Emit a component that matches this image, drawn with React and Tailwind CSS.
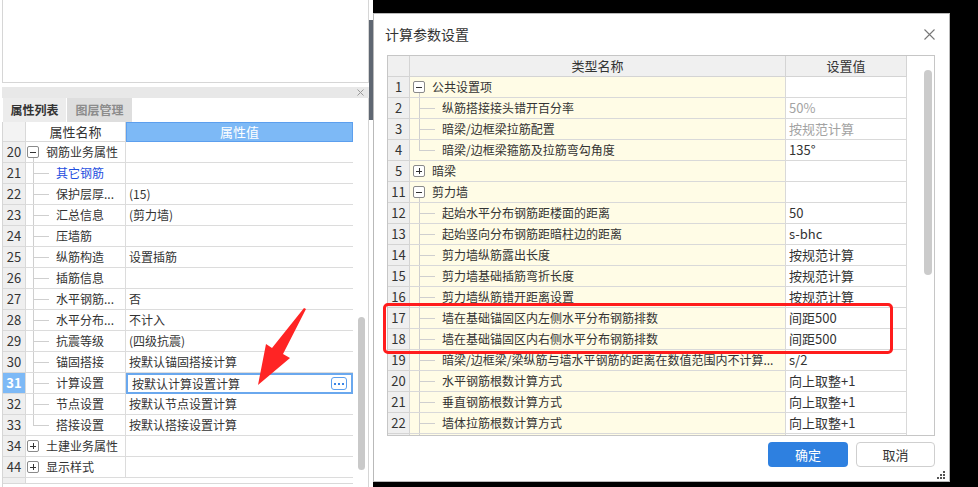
import React from 'react';

const FONT = "font-['Noto_Sans_CJK_SC',sans-serif]";

const leftRows = [
  { num: '20', name: '钢筋业务属性', kind: 'open' },
  { num: '21', name: '其它钢筋', kind: 'child', blue: true },
  { num: '22', name: '保护层厚...', value: '(15)', kind: 'child' },
  { num: '23', name: '汇总信息', value: '(剪力墙)', kind: 'child' },
  { num: '24', name: '压墙筋', kind: 'child' },
  { num: '25', name: '纵筋构造', value: '设置插筋', kind: 'child' },
  { num: '26', name: '插筋信息', kind: 'child' },
  { num: '27', name: '水平钢筋...', value: '否', kind: 'child' },
  { num: '28', name: '水平分布...', value: '不计入', kind: 'child' },
  { num: '29', name: '抗震等级', value: '(四级抗震)', kind: 'child' },
  { num: '30', name: '锚固搭接', value: '按默认锚固搭接计算', kind: 'child' },
  { num: '31', name: '计算设置', value: '按默认计算设置计算', kind: 'child', selected: true },
  { num: '32', name: '节点设置', value: '按默认节点设置计算', kind: 'child' },
  { num: '33', name: '搭接设置', value: '按默认搭接设置计算', kind: 'child', last: true },
  { num: '34', name: '土建业务属性', kind: 'closed' },
  { num: '44', name: '显示样式', kind: 'closed' },
];

const rightRows = [
  { num: '1', name: '公共设置项', kind: 'open' },
  { num: '2', name: '纵筋搭接接头错开百分率', value: '50%', kind: 'child', gray: true },
  { num: '3', name: '暗梁/边框梁拉筋配置', value: '按规范计算', kind: 'child', gray: true },
  { num: '4', name: '暗梁/边框梁箍筋及拉筋弯勾角度', value: '135°', kind: 'child', last: true },
  { num: '5', name: '暗梁', kind: 'closed' },
  { num: '11', name: '剪力墙', kind: 'open' },
  { num: '12', name: '起始水平分布钢筋距楼面的距离', value: '50', kind: 'child' },
  { num: '13', name: '起始竖向分布钢筋距暗柱边的距离', value: 's-bhc', kind: 'child' },
  { num: '14', name: '剪力墙纵筋露出长度', value: '按规范计算', kind: 'child' },
  { num: '15', name: '剪力墙基础插筋弯折长度', value: '按规范计算', kind: 'child' },
  { num: '16', name: '剪力墙纵筋错开距离设置', value: '按规范计算', kind: 'child' },
  { num: '17', name: '墙在基础锚固区内左侧水平分布钢筋排数', value: '间距500', kind: 'child' },
  { num: '18', name: '墙在基础锚固区内右侧水平分布钢筋排数', value: '间距500', kind: 'child' },
  { num: '19', name: '暗梁/边框梁/梁纵筋与墙水平钢筋的距离在数值范围内不计算...', value: 's/2', kind: 'child' },
  { num: '20', name: '水平钢筋根数计算方式', value: '向上取整+1', kind: 'child' },
  { num: '21', name: '垂直钢筋根数计算方式', value: '向上取整+1', kind: 'child' },
  { num: '22', name: '墙体拉筋根数计算方式', value: '向上取整+1', kind: 'child' },
  { num: '', name: '', kind: 'child' },
];

const TreeBox = ({ open }) => (
  <div className="relative w-[12px] h-[12px] shrink-0 border border-[#8a8a8a] rounded-[2px] bg-white">
    <div className="absolute left-[2px] top-[4.5px] w-[6px] h-px bg-[#333]" />
    {!open && <div className="absolute left-[4.5px] top-[2px] w-px h-[6px] bg-[#333]" />}
  </div>
);

// tree name cell used by both tables
const TreeCell = ({ row, lineX, boxPad, childPad, blue }) => {
  if (row.kind === 'child') {
    return (
      <>
        <div
          className={`absolute top-0 w-px bg-[#cfcfcf] ${row.last ? 'h-1/2' : 'bottom-0'}`}
          style={{ left: lineX }}
        />
        <div className="absolute top-1/2 w-[16px] h-px bg-[#cfcfcf]" style={{ left: lineX }} />
        <span
          className={`truncate pr-[8px] ${blue ? 'text-[#1f4fe0]' : 'text-[#333]'}`}
          style={{ paddingLeft: childPad }}
        >
          {row.name}
        </span>
      </>
    );
  }
  return (
    <>
      {row.kind === 'open' && (
        <div className="absolute top-[16px] bottom-0 w-px bg-[#cfcfcf]" style={{ left: lineX }} />
      )}
      <div className="flex items-center" style={{ paddingLeft: boxPad }}>
        <TreeBox open={row.kind === 'open'} />
        <span className="ml-[7px] text-[#333]">{row.name}</span>
      </div>
    </>
  );
};

const LeftPanel = () => (
  <div className="relative w-[369px] h-full bg-white shrink-0">
    <div className="ml-[2px] w-[367px] h-[83px] border-x border-b border-[#d6d6d6]" />
    <div className="mt-[4px] ml-[2px] w-[367px] h-[11px] bg-[#e8e8e8] flex items-center justify-end pr-[5px]">
      <svg width="7" height="7" viewBox="0 0 7 7">
        <path d="M0.5 0.5L6.5 6.5M6.5 0.5L0.5 6.5" stroke="#9a9a9a" strokeWidth="1" />
      </svg>
    </div>
    <div className="ml-[2px] w-[367px] h-[24px] flex border-r border-[#d6d6d6] text-[12px] font-bold">
      <div className="ml-[1px] w-[63px] bg-[#ececec] text-[#333] flex items-center justify-center">属性列表</div>
      <div className="ml-[1px] w-[65px] bg-[#dedede] text-[#8c8c8c] flex items-center justify-center">图层管理</div>
    </div>
    <div className="flex">
      <div className="ml-[2px] border-l border-[#d6d6d6] text-[12px]">
        <div className="flex h-[20px]">
          <div className="w-[23px] border-r border-b border-[#d9d9d9] bg-[#f3f3f3]" />
          <div className="w-[100px] border-r border-b border-[#d9d9d9] flex items-center justify-center text-[#333] text-[13px]">属性名称</div>
          <div className="w-[227px] bg-[#7db9f6] border border-[#5c9fee] flex items-center justify-center text-white text-[13px]">属性值</div>
        </div>
        {leftRows.map((r) => (
          <div key={r.num} className="flex h-[21px]">
            <div
              className={`w-[23px] border-r border-b border-[#d9d9d9] flex items-center justify-center text-[13px] ${
                r.selected ? 'bg-[#7db9f6] text-white font-bold' : 'bg-[#efefef] text-[#333]'
              }`}
            >
              {r.num}
            </div>
            <div className="relative w-[100px] border-r border-b border-[#dcdcdc] flex items-center whitespace-nowrap">
              <TreeCell row={r} lineX={7} boxPad={1} childPad={30} blue={r.blue} />
            </div>
            {r.selected ? (
              <div className="w-[227px] border-2 border-[#6aa8ee] flex items-center pl-[4px] pr-[4px] text-[#333]">
                <span className="flex-1">{r.value}</span>
                <div className="w-[16px] h-[13px] border border-[#5c9fee] rounded-[3px] flex items-center justify-center gap-[2px]">
                  <div className="w-[2px] h-[2px] bg-[#3c86e6]" />
                  <div className="w-[2px] h-[2px] bg-[#3c86e6]" />
                  <div className="w-[2px] h-[2px] bg-[#3c86e6]" />
                </div>
              </div>
            ) : (
              <div className="w-[227px] border-b border-[#dcdcdc] flex items-center pl-[3px] text-[#333] whitespace-nowrap">
                {r.value}
              </div>
            )}
          </div>
        ))}
        <div className="flex h-[6px]">
          <div className="w-[23px] bg-[#efefef] border-r border-b border-[#d9d9d9]" />
          <div className="flex-1 border-b border-[#d9d9d9]" />
        </div>
      </div>
      <div className="flex-1 border-r border-[#d6d6d6] h-[366px] pt-[195px] pl-[5px]">
        <div className="w-[7px] h-[153px] rounded-full bg-[#c9c9c9]" />
      </div>
    </div>
    <svg className="absolute left-0 top-0 pointer-events-none" width="369" height="487">
      <polygon points="306,309 304,308 272,348 266,344 258,385 290,358 283,354" fill="#ff2424" />
    </svg>
  </div>
);

const Dialog = () => (
  <div className="relative w-[577px] h-[469px] bg-white border border-[#b9b9b9]">
    <div className="h-[41px] flex items-center justify-between pl-[11px] pr-[14px]">
      <span className="text-[14px] text-[#333]">计算参数设置</span>
      <svg width="11" height="11" viewBox="0 0 11 11">
        <path d="M0.5 0.5L10.5 10.5M10.5 0.5L0.5 10.5" stroke="#777" strokeWidth="1.1" />
      </svg>
    </div>
    <div className="relative ml-[13px] w-[548px] h-[381px] border border-[#c6c6c6] flex text-[12px]">
      <div className="flex flex-col overflow-hidden">
        <div className="flex h-[21px] shrink-0 bg-[#f0f0f0] text-[13px] text-[#333]">
          <div className="w-[22px] border-r border-b border-[#d4d4d4]" />
          <div className="w-[376px] border-r border-b border-[#d4d4d4] flex items-center justify-center">类型名称</div>
          <div className="w-[121px] border-r border-b border-[#d4d4d4] flex items-center justify-center">设置值</div>
        </div>
        {rightRows.map((r, i) => (
          <div key={i} className="flex h-[21px] shrink-0">
            <div className="w-[22px] bg-[#efefef] border-r border-b border-[#d4d4d4] flex items-center justify-center text-[13px] text-[#333]">
              {r.num}
            </div>
            <div className="relative w-[376px] bg-[#fffce6] border-r border-b border-[#d9d9d9] flex items-center whitespace-nowrap overflow-hidden">
              <TreeCell row={r} lineX={9} boxPad={3} childPad={32} />
            </div>
            <div
              className={`w-[121px] border-r border-b border-[#d9d9d9] flex items-center pl-[3px] whitespace-nowrap text-[13px] ${
                r.gray ? 'text-[#a3a3a3]' : 'text-[#333]'
              }`}
            >
              {r.value}
            </div>
          </div>
        ))}
      </div>
      <div className="flex-1 pt-[14px] pl-[17px]">
        <div className="w-[8px] h-[205px] rounded-full bg-[#cbcbcb]" />
      </div>
      <div className="absolute left-[-5px] top-[247px] w-[510px] h-[51px] border-[3px] border-[#ff1c1c] rounded-[5px] pointer-events-none" />
    </div>
    <div className="mt-[6px] flex justify-end gap-[8px] pr-[14px]">
      <button className="w-[80px] h-[25px] rounded-[4px] bg-[#2e80e0] text-white text-[13px]">确定</button>
      <button className="w-[79px] h-[25px] rounded-[4px] border border-[#cfcfcf] bg-white text-[#333] text-[13px]">取消</button>
    </div>
    <svg className="absolute right-[3px] bottom-[1px]" width="9" height="9" viewBox="0 0 9 9">
      <rect x="6" y="0" width="2" height="2" fill="#555" />
      <rect x="3" y="3" width="2" height="2" fill="#555" />
      <rect x="6" y="3" width="2" height="2" fill="#555" />
      <rect x="0" y="6" width="2" height="2" fill="#555" />
      <rect x="3" y="6" width="2" height="2" fill="#555" />
      <rect x="6" y="6" width="2" height="2" fill="#555" />
    </svg>
  </div>
);

export default function App() {
  return (
    <div className={`flex w-[978px] h-[487px] overflow-hidden bg-black ${FONT}`}>
      <LeftPanel />
      <div className="w-[4px] h-full flex flex-col bg-white shrink-0">
        <div className="h-[20px]" />
        <div className="h-[100px] bg-[#5f6772]" />
      </div>
      <div className="pt-[13px]">
        <Dialog />
      </div>
    </div>
  );
}
